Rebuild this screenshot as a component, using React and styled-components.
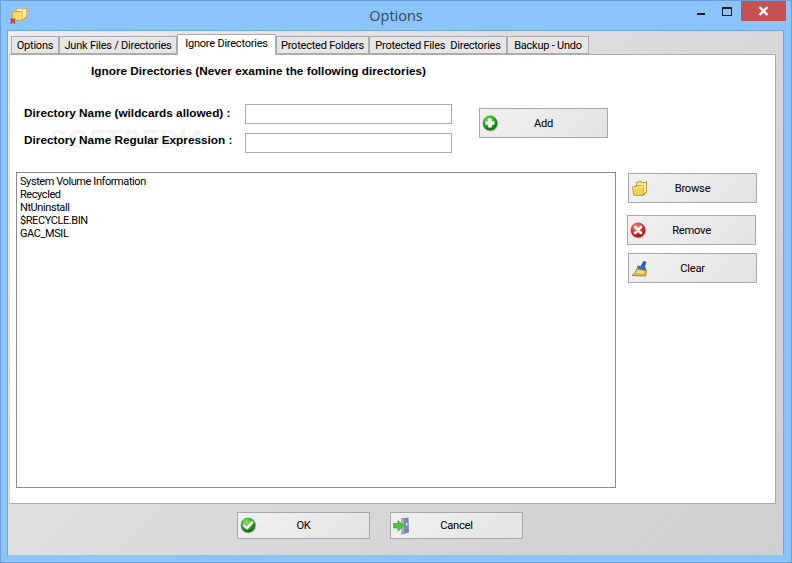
import React from "react";
import styled, { createGlobalStyle } from "styled-components";

const GlobalStyle = createGlobalStyle`
  html, body {
    margin: 0;
    padding: 0;
    background: #8ac4fa;
  }
  * {
    box-sizing: border-box;
  }
`;

const FONT = `"Roboto", "Liberation Sans", sans-serif`;

const Window = styled.div`
  width: 792px;
  height: 563px;
  display: flex;
  flex-direction: column;
  background: #8ac4fa;
  border: 1px solid #6b9fd6;
  font-family: ${FONT};
  font-size: 11px;
  color: #000;
  overflow: hidden;
`;

const TitleBar = styled.div`
  height: 29px;
  flex: none;
  display: grid;
  grid-template-columns: 1fr auto 1fr;
  align-items: start;
`;

const AppIcon = styled.div`
  padding: 5px 0 0 8px;
  line-height: 0;
`;

const Title = styled.div`
  font-family: "Open Sans", "Noto Sans", sans-serif;
  font-size: 14.5px;
  line-height: 30px;
  color: #3a4a5a;
`;

const Controls = styled.div`
  justify-self: end;
  display: flex;
  align-items: flex-start;
  margin-right: 5px;
`;

const MinButton = styled.div`
  width: 8px;
  height: 2px;
  margin: 12px 17px 0 0;
  background: #1c1c1c;
`;

const MaxButton = styled.div`
  width: 10px;
  height: 9px;
  margin: 6px 9px 0 0;
  border: 1px solid #1c1c1c;
  border-top-width: 2px;
`;

const CloseButton = styled.div`
  width: 45px;
  height: 20px;
  background: #c75050;
  display: flex;
  align-items: center;
  justify-content: center;
  line-height: 0;
`;

const Client = styled.div`
  flex: 1;
  margin: 0 7px 7px 6px;
  padding: 3px 8px 0 1px;
  border: 1px solid #72a6dc;
  border-bottom: none;
  background: linear-gradient(135deg, #ececec 0%, #d9d9d9 55%, #cfcfcf 100%);
  display: flex;
  flex-direction: column;
`;

const TabStrip = styled.div`
  height: 20px;
  display: flex;
  align-items: flex-end;
  padding-left: 2px;
  position: relative;
  z-index: 1;
`;

const Tab = styled.div`
  width: ${(p) => p.$width}px;
  height: ${(p) => (p.$active ? 21 : 18)}px;
  margin-bottom: ${(p) => (p.$active ? -1 : 0)}px;
  background: ${(p) => (p.$active ? "#fff" : "#e6e6e6")};
  border: 1px solid #acacac;
  border-bottom: ${(p) => (p.$active ? "none" : "1px solid #acacac")};
  text-align: center;
  font-size: 11px;
  letter-spacing: -0.22px;
  line-height: 18px;
  white-space: pre;
  color: #000;
`;

const Panel = styled.div`
  width: 767px;
  height: 450px;
  background: #fff;
  border-top: 1px solid #acacac;
  border-bottom: 1px solid #acacac;
  border-left: 1px solid #d8d8d8;
  border-right: 1px solid #acacac;
  padding: 9px 0 0 6px;
  position: relative;
`;

const Heading = styled.div`
  margin-left: 75px;
  font-family: "Liberation Sans", sans-serif;
  font-weight: bold;
  font-size: 11.8px;
  line-height: 15px;
`;

const FormArea = styled.div`
  margin: 25px 0 0 8px;
  display: flex;
  align-items: flex-start;
`;

const Fields = styled.div`
  display: flex;
  flex-direction: column;
  gap: 9px;
`;

const FieldRow = styled.div`
  display: flex;
  align-items: center;
  height: 20px;
`;

const Label = styled.label`
  width: 221px;
  margin-bottom: ${(p) => p.$lift}px;
  font-family: "Liberation Sans", sans-serif;
  font-weight: bold;
  font-size: 11.8px;
  white-space: pre;
  position: relative;
  z-index: 1;
`;

const TextInput = styled.div`
  width: 207px;
  height: 20px;
  background: #fff;
  border: 1px solid #ababab;
`;

const Button = styled.div`
  width: ${(p) => p.$width || 129}px;
  height: ${(p) => p.$height || 30}px;
  display: grid;
  grid-template-columns: 28px 1fr 28px;
  align-items: center;
  background: linear-gradient(135deg, #f1f1f1 0%, #e3e3e3 100%);
  border: 1px solid #a9a9a9;
  font-size: 11.2px;
  letter-spacing: -0.25px;
  text-align: center;
  color: #000;
`;

const ButtonIcon = styled.span`
  line-height: 0;
  text-align: left;
  padding-left: 2px;
`;

const AddButtonSlot = styled.div`
  margin: 4px 0 0 27px;
`;

const ListArea = styled.div`
  margin-top: 19px;
  display: flex;
  align-items: flex-start;
`;

const ListBox = styled.div`
  width: 600px;
  height: 316px;
  border: 1px solid #8c8c8c;
  padding: 2px 3px;
  font-size: 11px;
  letter-spacing: -0.42px;
  line-height: 13px;
  color: #000;
`;

const SideButtons = styled.div`
  margin: 1px 0 0 12px;
  display: flex;
  flex-direction: column;
`;

const RemoveSlot = styled.div`
  margin: 12px 0 8px -1px;
`;

const Footer = styled.div`
  display: flex;
  gap: 20px;
  padding: 8px 0 0 228px;
`;

const Watermark = styled.div`
  position: absolute;
  left: 40px;
  top: 69px;
  font-family: "Liberation Sans", sans-serif;
  font-size: 26px;
  font-weight: bold;
  letter-spacing: 1px;
  color: #f3f3f3;
  pointer-events: none;
`;

const WatermarkMark = styled.sup`
  font-size: 8px;
  font-weight: normal;
`;

function FolderIcon() {
  return (
    <svg width="17" height="17" viewBox="0 0 17 17">
      <path d="M1 7 L2.5 15.5 L12 16 L16 12.5 L16 1.5 L11.5 2.2 L9.5 1 L5 2.2 L5 5.5 Z" fill="#b8881c" />
      <path d="M5.7 5.4 L5.7 2.8 L9.3 1.9 L11.3 3 L15.2 2.4 L15.2 11.8 L12.8 14 L12.4 5 Z" fill="#fdeea6" />
      <path d="M1.9 7.4 L11.8 5.6 L12.2 15 L3.2 14.8 Z" fill="#f6d24e" />
      <path d="M1.9 7.4 L11.8 5.6 L11.9 7.6 L2.3 9.2 Z" fill="#fbe68a" />
    </svg>
  );
}

function WinIcon() {
  return (
    <svg width="19" height="19" viewBox="0 0 19 19">
      <path d="M3 6 L3 14 L13 15 L18 11 L18 2 L13 3 L11 2 L7 3 L7 5 Z" fill="#c99a22" />
      <path d="M7.5 5 L7.5 3.5 L11 2.6 L13 3.6 L17.4 2.7 L17.4 10.5 L13.5 13.5 L13.5 5 Z" fill="#fdf0ae" />
      <path d="M3.6 6.4 L13 5.4 L13 14.2 L4 13.4 Z" fill="#f8dd6c" />
      <path d="M1 13 L2.5 12.2 L3.8 13.6 L5.2 12.2 L6.6 13 L5.4 15 L6.6 17 L5.2 18 L3.8 16.4 L2.4 18 L1 17 L2.2 15 Z" fill="#d8392c" />
    </svg>
  );
}

function CircleIcon({ id, light, mid, dark, children }) {
  return (
    <svg width="17" height="17" viewBox="0 0 17 17">
      <defs>
        <radialGradient id={id} cx="40%" cy="30%" r="75%">
          <stop offset="0%" stopColor={light} />
          <stop offset="55%" stopColor={mid} />
          <stop offset="100%" stopColor={dark} />
        </radialGradient>
      </defs>
      <circle cx="8.8" cy="9" r="7.6" fill="#00000030" />
      <circle cx="8" cy="8" r="7.4" fill={`url(#${id})`} />
      {children}
    </svg>
  );
}

const PlusIcon = () => (
  <CircleIcon id="g-plus" light="#7fe06a" mid="#27a51f" dark="#0c5f10">
    <path d="M6.2 3.5 H9.8 V6.2 H12.5 V9.8 H9.8 V12.5 H6.2 V9.8 H3.5 V6.2 H6.2 Z" fill="#f2fff0" />
  </CircleIcon>
);

const RemoveIcon = () => (
  <CircleIcon id="g-remove" light="#ff8a78" mid="#e0302a" dark="#8c0f0f">
    <path d="M5 5 L11 11 M11 5 L5 11" stroke="#fff" strokeWidth="2.6" strokeLinecap="round" />
  </CircleIcon>
);

const CheckIcon = () => (
  <CircleIcon id="g-check" light="#8be56f" mid="#2fa825" dark="#0b5c10">
    <path d="M4 8.4 L7 11.2 L12.2 5.4" fill="none" stroke="#fff" strokeWidth="2.5" strokeLinecap="round" strokeLinejoin="round" />
  </CircleIcon>
);

function BroomIcon() {
  return (
    <svg width="17" height="17" viewBox="0 0 17 17">
      <path d="M9.5 6.5 L12.5 1 L15.5 2 L13.5 7.5 Z" fill="#1f5fc0" />
      <path d="M6 5.5 L14.5 7 L15.5 11 L7 10 Z" fill="#2b6fd0" />
      <path d="M6 8.5 L15.5 10.5 L14.5 16 L1 15.5 C3.5 13.8 5 11.5 6 8.5 Z" fill="#e2b93c" stroke="#8f6e16" strokeWidth="0.7" />
      <path d="M6.5 10 L14 11.5 L13 13.5 L5 13 Z" fill="#f5dc7c" />
    </svg>
  );
}

function ExitIcon() {
  return (
    <svg width="18" height="18" viewBox="0 0 18 18">
      <path d="M8 1.5 L15.5 0.5 L16 15.5 L8 17.5 Z" fill="#7d86ae" />
      <path d="M8 1.5 L11 2.5 L11 15.5 L8 17.5 Z" fill="#a8afd0" />
      <rect x="13" y="6" width="1.5" height="2.6" fill="#e8ecf6" />
      <path d="M0.5 6.5 H5 V3.5 L10.5 8.8 L5 14 V11 H0.5 Z" fill="#4fc636" stroke="#2a8a22" strokeWidth="0.6" />
    </svg>
  );
}

const TABS = [
  { label: "Options", width: 48 },
  { label: "Junk Files / Directories", width: 118 },
  { label: "Ignore Directories", width: 99, active: true },
  { label: "Protected Folders", width: 93 },
  { label: "Protected Files  Directories", width: 138 },
  { label: "Backup - Undo", width: 82 },
];

const IGNORED = ["System Volume Information", "Recycled", "NtUninstall", "$RECYCLE.BIN", "GAC_MSIL"];

function IconButton({ icon, children, width, height }) {
  return (
    <Button $width={width} $height={height}>
      <ButtonIcon>{icon}</ButtonIcon>
      <span>{children}</span>
    </Button>
  );
}

export default function App() {
  return (
    <>
      <GlobalStyle />
      <Window>
        <TitleBar>
          <AppIcon>
            <WinIcon />
          </AppIcon>
          <Title>Options</Title>
          <Controls>
            <MinButton />
            <MaxButton />
            <CloseButton>
              <svg width="11" height="10" viewBox="0 0 11 10">
                <path d="M1.5 1 L9.5 9 M9.5 1 L1.5 9" stroke="#fff" strokeWidth="2.4" />
              </svg>
            </CloseButton>
          </Controls>
        </TitleBar>
        <Client>
          <TabStrip>
            {TABS.map((t) => (
              <Tab key={t.label} $width={t.width} $active={t.active}>
                {t.label}
              </Tab>
            ))}
          </TabStrip>
          <Panel>
            <Watermark>
              SOFTPEDIA<WatermarkMark>®</WatermarkMark>
            </Watermark>
            <Heading>Ignore Directories (Never examine the following directories)</Heading>
            <FormArea>
              <Fields>
                <FieldRow>
                  <Label $lift={2}>Directory Name (wildcards allowed) :</Label>
                  <TextInput />
                </FieldRow>
                <FieldRow>
                  <Label $lift={6}>Directory Name Regular Expression :</Label>
                  <TextInput />
                </FieldRow>
              </Fields>
              <AddButtonSlot>
                <IconButton icon={<PlusIcon />}>Add</IconButton>
              </AddButtonSlot>
            </FormArea>
            <ListArea>
              <ListBox>
                {IGNORED.map((name) => (
                  <div key={name}>{name}</div>
                ))}
              </ListBox>
              <SideButtons>
                <IconButton icon={<FolderIcon />}>Browse</IconButton>
                <RemoveSlot>
                  <IconButton icon={<RemoveIcon />}>Remove</IconButton>
                </RemoveSlot>
                <IconButton icon={<BroomIcon />}>Clear</IconButton>
              </SideButtons>
            </ListArea>
          </Panel>
          <Footer>
            <IconButton icon={<CheckIcon />} width={133} height={27}>
              OK
            </IconButton>
            <IconButton icon={<ExitIcon />} width={133} height={27}>
              Cancel
            </IconButton>
          </Footer>
        </Client>
      </Window>
    </>
  );
}
